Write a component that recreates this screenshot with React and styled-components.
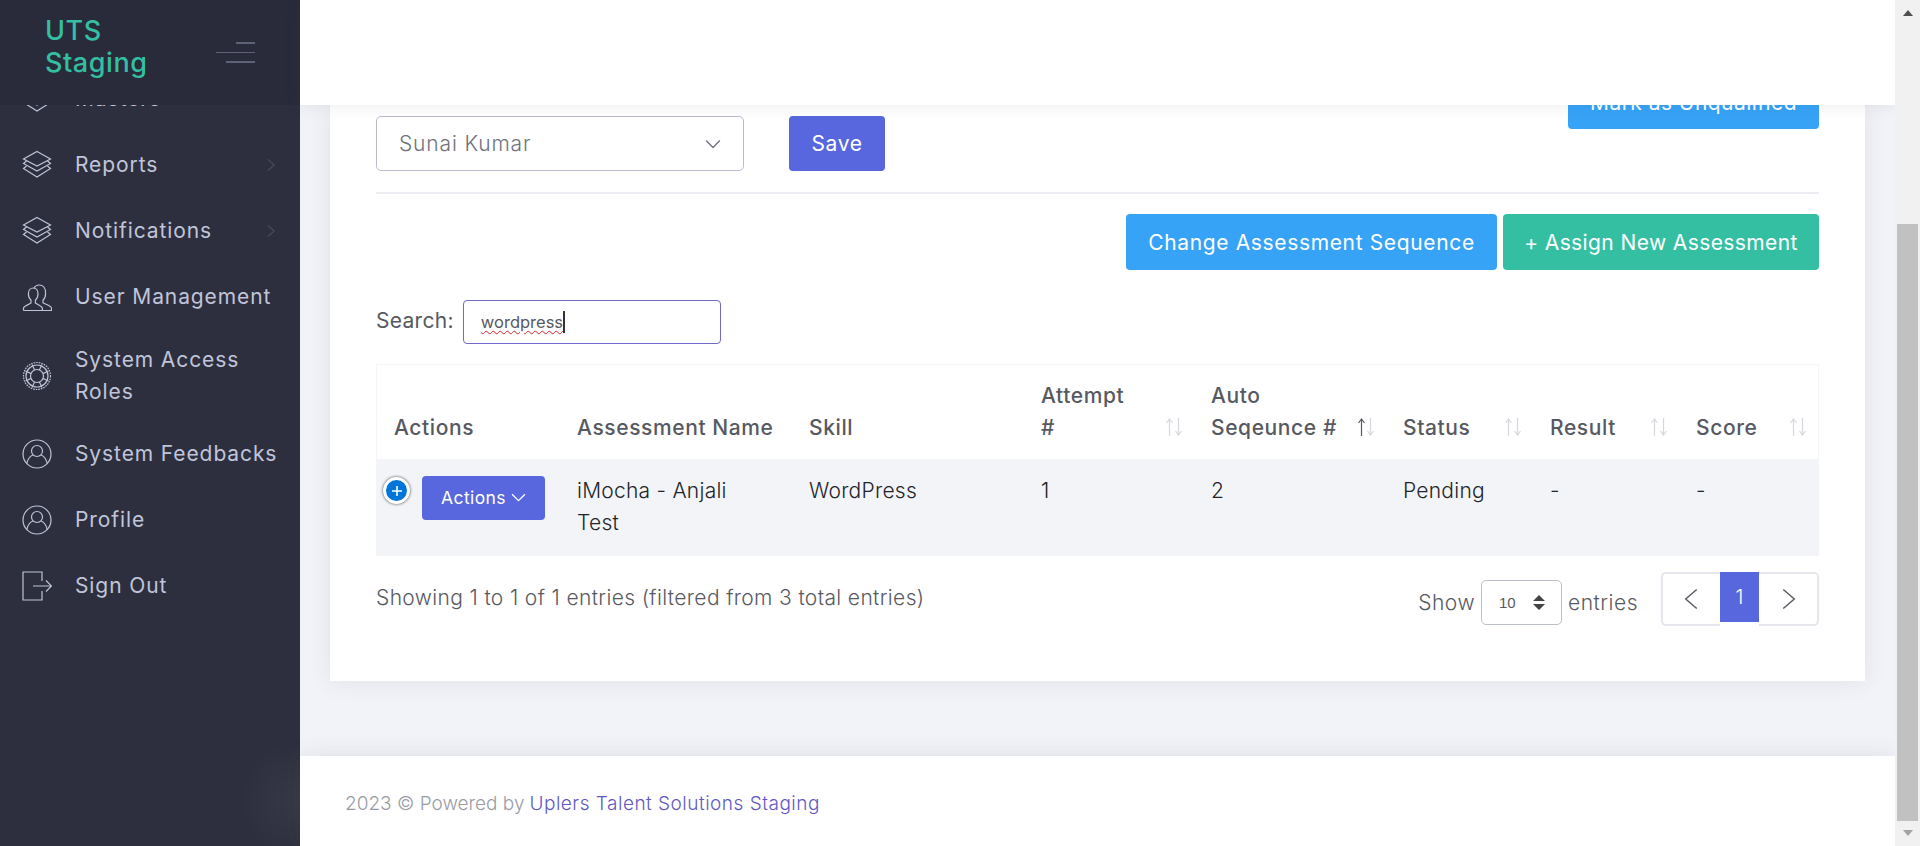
import React from "react";
import styled, { createGlobalStyle } from "styled-components";

const Global = createGlobalStyle`
  html, body { margin: 0; padding: 0; height: 846px; overflow: hidden; background: #fff; }
  * { box-sizing: border-box; }
  body { font-family: "Inter", "Liberation Sans", sans-serif; }
`;

const Shell = styled.div`
  display: flex;
  width: 1920px;
  height: 846px;
  overflow: hidden;
`;

const Sidebar = styled.aside`
  width: 300px;
  flex: none;
  display: flex;
  flex-direction: column;
  background: radial-gradient(circle at 100% 800px, rgba(255, 255, 255, 0.05), transparent 60px), #2d2f3e;
  overflow: hidden;
`;

const Brand = styled.div`
  height: 105px;
  flex: none;
  display: flex;
  align-items: center;
  justify-content: space-between;
  padding: 0 45px 0 45px;
  background: #292b3a;
  position: relative;
  z-index: 2;
`;

const BrandName = styled.div`
  width: 120px;
  margin-top: -11px;
  font-size: 27px;
  line-height: 32px;
  font-weight: 500;
  letter-spacing: 0.55px;
  color: #34bfa3;
`;

const Burger = styled.div`
  width: 39px;
  display: flex;
  flex-direction: column;
  align-items: flex-end;
  gap: 8px;
  margin-right: 0;
`;

const BurgerLine = styled.span`
  display: block;
  height: ${(p) => p.$h}px;
  width: ${(p) => p.$w}px;
  background: #5f6177;
`;

const Nav = styled.nav`
  display: flex;
  flex-direction: column;
  margin-top: -39px;
  padding-left: 22px;
`;

const NavItem = styled.div`
  display: flex;
  align-items: center;
  min-height: ${(p) => p.$h || 66}px;
  color: #c0c5da;
  font-size: 21px;
  letter-spacing: 0.9px;
  line-height: 32px;
  position: relative;
`;

const NavIcon = styled.span`
  width: 30px;
  height: 30px;
  flex: none;
  margin-right: 23px;
  color: #bfc3d6;
  display: flex;
`;

const NavLabel = styled.span`
  width: 212px;
  white-space: ${(p) => (p.$wrap ? "normal" : "nowrap")};
`;

const NavArrow = styled.span`
  position: absolute;
  left: 242px;
  top: 50%;
  transform: translateY(-50%);
  color: #4a4c60;
  display: flex;
`;

const Main = styled.main`
  flex: 1;
  min-width: 0;
  display: flex;
  flex-direction: column;
  background: #f2f3f8;
`;

const Header = styled.header`
  height: 105px;
  flex: none;
  background: #fff;
  box-shadow: 0 1px 15px rgba(69, 65, 78, 0.1);
  position: relative;
  z-index: 2;
`;

const Content = styled.div`
  flex: 1;
  padding: 0 30px;
  overflow: hidden;
`;

const Card = styled.section`
  height: 576px;
  background: #fff;
  padding: 0 46px;
  box-shadow: 0 1px 22px rgba(69, 65, 78, 0.09);
`;

const TopRow = styled.div`
  display: flex;
  align-items: flex-start;
  height: 89px;
  border-bottom: 2px solid #ebedf2;
  position: relative;
`;

const SelectBox = styled.div`
  width: 368px;
  height: 55px;
  margin-top: 11px;
  padding: 0 22px;
  border: 1px solid #b9bbcc;
  border-radius: 5px;
  display: flex;
  align-items: center;
  justify-content: space-between;
  color: #6f727d;
  font-size: 21px;
  letter-spacing: 0.85px;
  font-weight: 300;
`;

const Button = styled.div`
  display: flex;
  align-items: center;
  justify-content: center;
  color: #fff;
  background: ${(p) => p.$bg};
  border-radius: 4px;
  font-size: 21px;
  letter-spacing: ${(p) => p.$ls ?? 0.65}px;
  white-space: nowrap;
`;

const SaveButton = styled(Button)`
  width: 96px;
  height: 55px;
  margin-top: 11px;
  margin-left: 45px;
`;

const UnqualifiedButton = styled(Button)`
  position: absolute;
  right: 0;
  top: -30px;
  width: 251px;
  height: 54px;
`;

const ButtonRow = styled.div`
  display: flex;
  justify-content: flex-end;
  gap: 6px;
  margin-top: 20px;
`;

const WideButton = styled(Button)`
  height: 56px;
  width: ${(p) => p.$w}px;
`;

const SearchRow = styled.label`
  display: flex;
  align-items: center;
  gap: 9px;
  margin-top: 30px;
  color: #575962;
  font-size: 21px;
  letter-spacing: 0.3px;
`;

const SearchLabel = styled.span`
  margin-bottom: 4px;
`;

const SearchBox = styled.div`
  width: 258px;
  height: 44px;
  border: 1px solid #716aca;
  border-radius: 4px;
  padding: 0 17px;
  display: flex;
  align-items: center;
  font-size: 16.5px;
  letter-spacing: 0;
  color: #575962;
`;

const Misspelled = styled.span`
  text-decoration: underline wavy #e02020 1px;
  text-underline-offset: 2px;
  border-right: 2px solid #333;
  line-height: 22px;
`;

const Table = styled.div`
  margin-top: 20px;
  border: 1px solid #f4f5f8;
  border-bottom: 0;
`;

const Cols = `grid-template-columns: 183px 232px 232px 170px 192px 147px 146px 1fr;`;

const HeadRow = styled.div`
  display: grid;
  ${Cols}
  height: 94px;
  align-items: end;
`;

const HeadCell = styled.div`
  position: relative;
  padding: 0 0 15px 17px;
  color: #575962;
  font-size: 21px;
  letter-spacing: 0.6px;
  font-weight: 500;
  line-height: 32px;
  white-space: nowrap;
`;

const Sort = styled.span`
  position: absolute;
  right: 10px;
  bottom: 23px;
  display: flex;
`;

const BodyRow = styled.div`
  display: grid;
  ${Cols}
  height: 97px;
  background: #f3f4f8;
`;

const BodyCell = styled.div`
  padding: 16px 30px 0 17px;
  color: #212529;
  font-size: 21px;
  letter-spacing: 0.25px;
  font-weight: 300;
  line-height: 32px;
`;

const ActionCell = styled.div`
  position: relative;
  padding: 17px 0 0 45px;
`;

const Expand = styled.span`
  position: absolute;
  left: 6px;
  top: 18px;
  width: 27px;
  height: 27px;
  border-radius: 50%;
  border: 3px solid #fff;
  background: #0275d8;
  box-shadow: 0 0 3px #444;
  color: #fff;
  display: flex;
  align-items: center;
  justify-content: center;
`;

const ActionsButton = styled(Button)`
  width: 123px;
  height: 44px;
  gap: 5px;
  font-size: 17.5px;
  letter-spacing: 0.4px;
  padding-bottom: 2px;
`;

const Footer = styled.div`
  display: flex;
  justify-content: space-between;
  align-items: flex-start;
  margin-top: 16px;
  color: #575962;
`;

const Info = styled.div`
  margin-top: 14px;
  font-size: 21px;
  letter-spacing: 0.36px;
  font-weight: 300;
  line-height: 24px;
`;

const Controls = styled.div`
  display: flex;
  align-items: flex-start;
`;

const Show = styled.div`
  display: flex;
  align-items: center;
  gap: 6px;
  margin: 8px 23px 0 0;
  font-size: 21px;
  letter-spacing: 0.5px;
  font-weight: 300;
`;

const SmallSelect = styled.div`
  width: 81px;
  height: 45px;
  border: 1px solid #bcc0c8;
  border-radius: 5px;
  padding: 0 16px 0 17px;
  display: flex;
  align-items: center;
  justify-content: space-between;
  font-family: "Liberation Sans", sans-serif;
  font-size: 15px;
  letter-spacing: 0;
`;

const Pager = styled.div`
  display: flex;
  height: 54px;
`;

const PageButton = styled.div`
  width: ${(p) => p.$w}px;
  height: ${(p) => (p.$active ? 50 : 54)}px;
  display: flex;
  align-items: center;
  justify-content: center;
  color: ${(p) => (p.$active ? "#fff" : "#575962")};
  background: ${(p) => (p.$active ? "#5867dd" : "#fff")};
  border: ${(p) => (p.$active ? "0" : "2px solid #e6e7ee")};
  border-width: ${(p) => p.$bw || "0"};
  border-radius: ${(p) => p.$r || 0};
  font-size: 20px;
  font-weight: 300;
`;

const PageFooter = styled.footer`
  height: 90px;
  flex: none;
  background: #fff;
  padding: 4px 0 0 45px;
  display: flex;
  align-items: center;
  font-size: 19px;
  font-weight: 300;
  color: #9a9ca5;
  position: relative;
  box-shadow: 0 -1px 22px rgba(69, 65, 78, 0.1);
`;

const Link = styled.span`
  margin-left: 5px;
  letter-spacing: 0.5px;
  color: #5f58c4;
`;

const Scrollbar = styled.div`
  width: 25px;
  flex: none;
  position: relative;
  z-index: 3;
  background: #f1f1f1;
  display: flex;
  flex-direction: column;
  align-items: center;
`;

const ArrowUp = styled.span`
  margin-top: 10px;
  width: 0;
  height: 0;
  border-left: 5.5px solid transparent;
  border-right: 5.5px solid transparent;
  border-bottom: 6px solid #505050;
`;

const Thumb = styled.div`
  width: 21px;
  height: 597px;
  margin-top: 208px;
  background: #c1c1c1;
`;

const ArrowDown = styled.span`
  margin-top: 9px;
  width: 0;
  height: 0;
  border-left: 5.5px solid transparent;
  border-right: 5.5px solid transparent;
  border-top: 6px solid #a3a3a3;
`;

const Svg = ({ children, size = 30, vb = 30, sw = 1.2 }) => (
  <svg width={size} height={size} viewBox={`0 0 ${vb} ${vb}`} fill="none" stroke="currentColor" strokeWidth={sw}>
    {children}
  </svg>
);

const Layers = () => (
  <Svg>
    <path d="M15 1.5 28.5 9 15 16 1.5 9Z" />
    <path d="M4.5 11 1.5 13.5 15 21 28.5 13.5 25.5 11" />
    <path d="M4.5 16 1.5 18.5 15 27 28.5 18.5 25.5 16" />
  </Svg>
);

const Users = () => (
  <Svg>
    <path d="M1.5 28.5h28v-2.500c-.3-2-5.500-3.500-8.500-5.200v-2.600c2-1.700 2.600-4.200 2.600-7 0-5-2.600-8.200-6.200-8.200-2.700 0-4.500 1.300-5.500 3.400" />
    <path d="M1.5 28.5v-2.500c.4-2 4.500-3 7.500-5v-2.800c-1.800-1.500-2.600-3.600-2.600-6.200 0-3.600 2-6 4.800-6s4.800 2.400 4.800 6c0 2.600-.8 4.700-2.600 6.200V21c3 2 6.500 3 7 5v2.500" />
  </Svg>
);

const LifeRing = () => (
  <Svg>
    <circle cx="15" cy="15" r="13.5" strokeDasharray="1.6 1" />
    <circle cx="15" cy="15" r="11" />
    <circle cx="15" cy="15" r="6.5" />
    <path d="M10 3.500 12.600 9M20 3.500 17.400 9M10 26.500 12.600 21M20 26.500 17.400 21M3.500 10 9 12.600M3.500 20 9 17.400M26.500 10 21 12.600M26.500 20 21 17.400" />
  </Svg>
);

const UserCircle = () => (
  <Svg>
    <circle cx="15" cy="15" r="14" />
    <circle cx="15" cy="12" r="5.5" />
    <path d="M4.800 24.500c1-4.500 3.500-7.500 6.200-8.500M25.200 24.500c-1-4.500-3.500-7.500-6.200-8.500" />
  </Svg>
);

const SignOut = () => (
  <Svg>
    <path d="M20 10V1H1v28h19v-9" />
    <path d="M11 15h18M24 9.500 29.500 15 24 20.500" />
  </Svg>
);

const Chevron = ({ size = 14, dir = "down", sw = 1.2 }) => {
  const d = {
    down: "M1 4 7 10 13 4",
    left: "M10 1 3 7 10 13",
    right: "M4 1 11 7 4 13",
  }[dir];
  return (
    <svg width={size} height={size} viewBox="0 0 14 14" fill="none" stroke="currentColor" strokeWidth={sw}>
      <path d={d} />
    </svg>
  );
};

const SortIcon = ({ active }) => (
  <Sort>
    <svg width="20" height="18" viewBox="0 0 20 18" fill="none" strokeWidth="1.2">
      <path d="M5.500 18V1M2.500 5 5.500 1 8.500 5" stroke={active ? "#575962" : "#d5d7de"} />
      <path d="M14.500 0V17M11.500 13 14.500 17 17.500 13" stroke="#d5d7de" />
    </svg>
  </Sort>
);

const nav = [
  { label: "Masters", icon: <Layers /> },
  { label: "Reports", icon: <Layers />, arrow: true },
  { label: "Notifications", icon: <Layers />, arrow: true },
  { label: "User Management", icon: <Users /> },
  { label: "System Access Roles", icon: <LifeRing />, wrap: true, h: 91 },
  { label: "System Feedbacks", icon: <UserCircle /> },
  { label: "Profile", icon: <UserCircle /> },
  { label: "Sign Out", icon: <SignOut /> },
];

const heads = [
  { t: ["Actions"] },
  { t: ["Assessment Name"] },
  { t: ["Skill"] },
  { t: ["Attempt", "#"], sort: true },
  { t: ["Auto", "Seqeunce #"], sort: true, active: true },
  { t: ["Status"], sort: true },
  { t: ["Result"], sort: true },
  { t: ["Score"], sort: true },
];

export default function App() {
  return (
    <Shell>
      <Global />
      <Sidebar>
        <Brand>
          <BrandName>UTS Staging</BrandName>
          <Burger>
            <BurgerLine $w={19} $h={2} />
            <BurgerLine $w={39} $h={1} />
            <BurgerLine $w={29} $h={2} />
          </Burger>
        </Brand>
        <Nav>
          {nav.map((n) => (
            <NavItem key={n.label} $h={n.h}>
              <NavIcon>{n.icon}</NavIcon>
              <NavLabel $wrap={n.wrap}>{n.label}</NavLabel>
              {n.arrow && (
                <NavArrow>
                  <Chevron size={13} dir="right" />
                </NavArrow>
              )}
            </NavItem>
          ))}
        </Nav>
      </Sidebar>
      <Main>
        <Header />
        <Content>
          <Card>
            <TopRow>
              <SelectBox>
                Sunai Kumar
                <Chevron size={16} />
              </SelectBox>
              <SaveButton $bg="#5867dd">Save</SaveButton>
              <UnqualifiedButton $bg="#36a3f7" $ls={0.45}>Mark as Unqualified</UnqualifiedButton>
            </TopRow>
            <ButtonRow>
              <WideButton $bg="#36a3f7" $w={371}>Change Assessment Sequence</WideButton>
              <WideButton $bg="#34bfa3" $w={316} $ls={0.4}>+ Assign New Assessment</WideButton>
            </ButtonRow>
            <SearchRow>
              <SearchLabel>Search:</SearchLabel>
              <SearchBox>
                <Misspelled>wordpress</Misspelled>
              </SearchBox>
            </SearchRow>
            <Table>
              <HeadRow>
                {heads.map((h) => (
                  <HeadCell key={h.t.join(" ")}>
                    {h.t.map((line, i) => (
                      <React.Fragment key={line}>
                        {i > 0 && <br />}
                        {line}
                      </React.Fragment>
                    ))}
                    {h.sort && <SortIcon active={h.active} />}
                  </HeadCell>
                ))}
              </HeadRow>
              <BodyRow>
                <ActionCell>
                  <Expand>
                    <svg width="12" height="12" viewBox="0 0 12 12" stroke="#fff" strokeWidth="1.600">
                      <path d="M6 1v10M1 6h10" />
                    </svg>
                  </Expand>
                  <ActionsButton $bg="#5867dd">
                    Actions
                    <Chevron size={15} />
                  </ActionsButton>
                </ActionCell>
                <BodyCell>iMocha - Anjali Test</BodyCell>
                <BodyCell>WordPress</BodyCell>
                <BodyCell>1</BodyCell>
                <BodyCell>2</BodyCell>
                <BodyCell>Pending</BodyCell>
                <BodyCell>-</BodyCell>
                <BodyCell>-</BodyCell>
              </BodyRow>
            </Table>
            <Footer>
              <Info>Showing 1 to 1 of 1 entries (filtered from 3 total entries)</Info>
              <Controls>
                <Show>
                  Show
                  <SmallSelect>
                    10
                    <svg width="12" height="15" viewBox="0 0 13 16" fill="#444">
                      <path d="M6.500 0 13 6.500H0ZM6.500 16 0 9.500H13Z" />
                    </svg>
                  </SmallSelect>
                  entries
                </Show>
                <Pager>
                  <PageButton $w={59} $bw="2px 0 2px 2px" $r="5px 0 0 5px"><Chevron size={22} dir="left" sw={0.9} /></PageButton>
                  <PageButton $w={39} $active>1</PageButton>
                  <PageButton $w={60} $bw="2px 2px 2px 0" $r="0 5px 5px 0"><Chevron size={22} dir="right" sw={0.9} /></PageButton>
                </Pager>
              </Controls>
            </Footer>
          </Card>
        </Content>
        <PageFooter>
          2023 © Powered by <Link>Uplers Talent Solutions Staging</Link>
        </PageFooter>
      </Main>
      <Scrollbar>
        <ArrowUp />
        <Thumb />
        <ArrowDown />
      </Scrollbar>
    </Shell>
  );
}
